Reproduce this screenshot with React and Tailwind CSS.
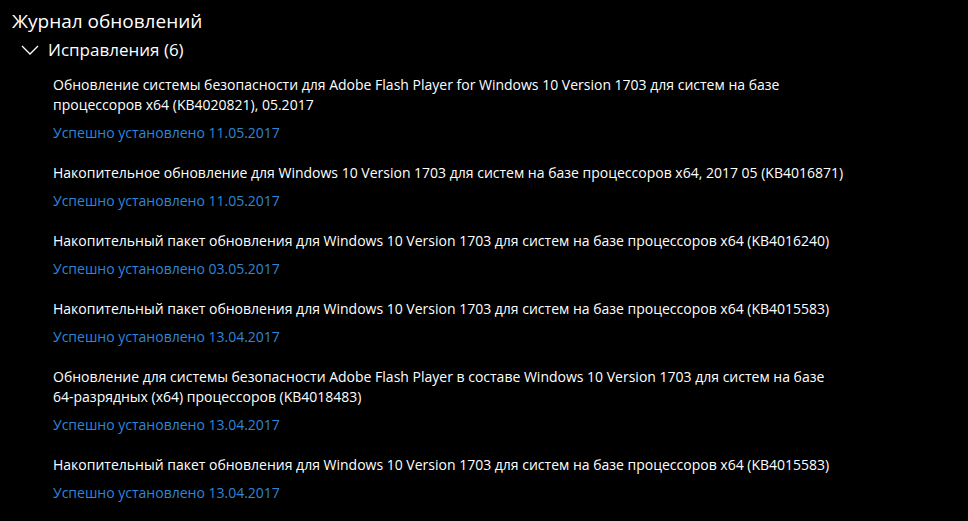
const updates = [
  {
    title:
      "Обновление системы безопасности для Adobe Flash Player for Windows 10 Version 1703 для систем на базе\nпроцессоров x64 (KB4020821), 05.2017",
    date: "11.05.2017",
  },
  {
    title:
      "Накопительное обновление для Windows 10 Version 1703 для систем на базе процессоров x64, 2017 05 (KB4016871)",
    date: "11.05.2017",
  },
  {
    title:
      "Накопительный пакет обновления для Windows 10 Version 1703 для систем на базе процессоров x64 (KB4016240)",
    date: "03.05.2017",
  },
  {
    title:
      "Накопительный пакет обновления для Windows 10 Version 1703 для систем на базе процессоров x64 (KB4015583)",
    date: "13.04.2017",
  },
  {
    title:
      "Обновление для системы безопасности Adobe Flash Player в составе Windows 10 Version 1703 для систем на базе\n64-разрядных (x64) процессоров (KB4018483)",
    date: "13.04.2017",
  },
  {
    title:
      "Накопительный пакет обновления для Windows 10 Version 1703 для систем на базе процессоров x64 (KB4015583)",
    date: "13.04.2017",
  },
];

const UpdateItem = ({ title, date }) => (
  <div className="flex flex-col">
    {title.split("\n").map((line, i) => (
      <p key={i} className="text-white text-[14px] leading-[20px] whitespace-nowrap">
        {line}
      </p>
    ))}
    <p className="mt-[8px] text-[#2f86d8] text-[14px] leading-[20px]">
      Успешно установлено {date}
    </p>
  </div>
);

export default function App() {
  return (
    <div
      className="w-[968px] h-[521px] bg-black overflow-hidden pl-[12px] pt-[8px]"
      style={{ fontFamily: '"Open Sans", "Noto Sans", sans-serif' }}
    >
      <h1 className="text-white text-[19px] leading-[26px]">Журнал обновлений</h1>
      <div className="flex items-center mt-[3px] h-[26px]">
        <svg width="18" height="10" viewBox="0 0 18 10" className="ml-[9px]">
          <path d="M1 1 L9 9 L17 1" fill="none" stroke="#fff" strokeWidth="1.3" />
        </svg>
        <span className="ml-[9px] text-white text-[17px] leading-[22px]">Исправления (6)</span>
      </div>
      <div className="flex flex-col gap-[20px] pl-[41px] mt-[12px]">
        {updates.map((u, i) => (
          <UpdateItem key={i} title={u.title} date={u.date} />
        ))}
      </div>
    </div>
  );
}
